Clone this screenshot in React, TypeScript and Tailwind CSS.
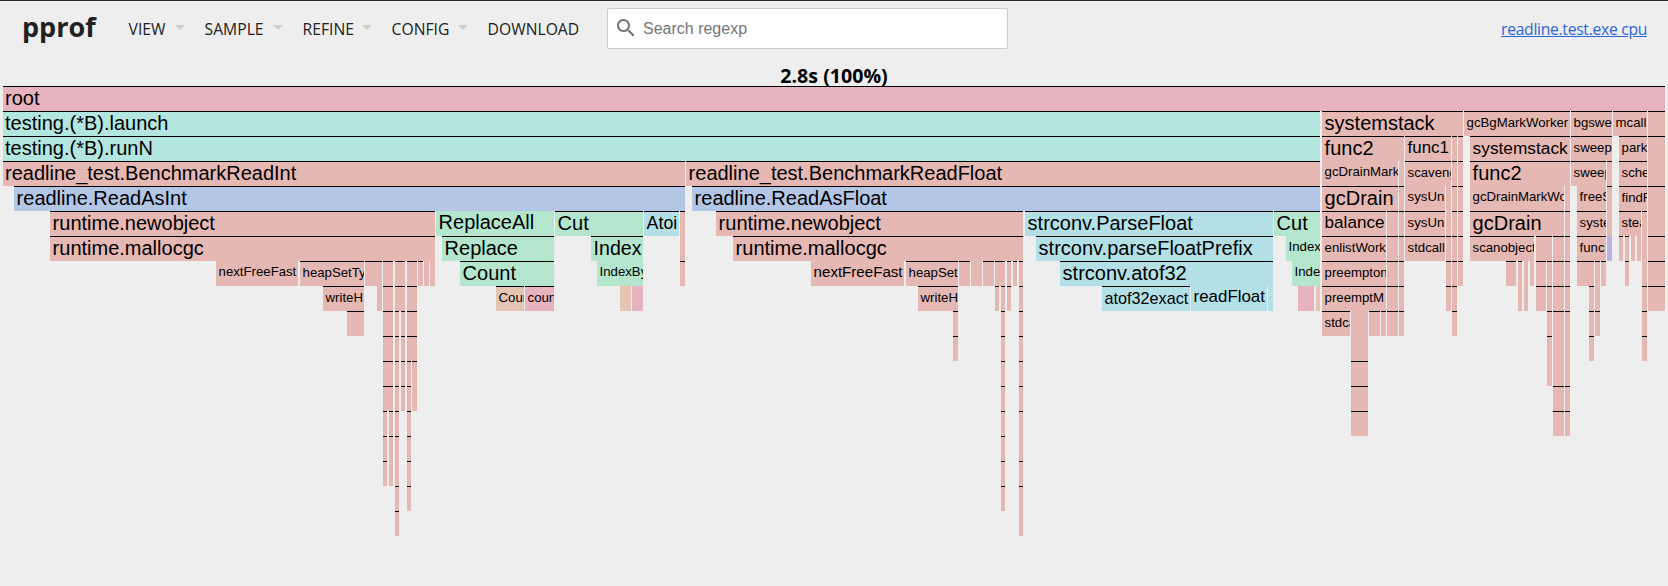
import React from "react";

type Box = [number, number, string, string?, number?];

const COLORS: Record<string, string> = {
  p: "bg-[#e6b3bf]",
  s: "bg-[#e6b8b3]",
  t: "bg-[#b3e6de]",
  b: "bg-[#b3c6e6]",
  g: "bg-[#b3e6cc]",
  c: "bg-[#b3e0e6]",
  o: "bg-[#e6c4b3]",
  v: "bg-[#b8b3e6]",
};

// Each box: start, end, colour key (suffix "-" marks an inlined frame), label, font size.
const S = 13.2;
const ROWS: Box[][] = [
  [[3, 1665, "p", "root"]],
  [[3, 1320, "t", "testing.(*B).launch"], [1322, 1463, "s", "systemstack"], [1464, 1570, "s", "gcBgMarkWorker", S], [1571, 1612, "s", "bgswe", S], [1613, 1647, "s", "mcall", S], [1648, 1665, "s"]],
  [[3, 1320, "t", "testing.(*B).runN"], [1322, 1404, "s", "func2"], [1405, 1451, "s", "func1", 16.9], [1452, 1457, "s"], [1458, 1463, "s"], [1470, 1570, "s", "systemstack", 17.3], [1571, 1612, "s", "sweep", S], [1619, 1647, "s", "park", S], [1648, 1665, "s"]],
  [[3, 685, "s", "readline_test.BenchmarkReadInt"], [686, 1320, "s", "readline_test.BenchmarkReadFloat"], [1322, 1398, "s-", "gcDrainMark", S], [1399, 1404, "s-"], [1405, 1451, "s", "scaveng", S], [1452, 1457, "s"], [1458, 1463, "s"], [1470, 1570, "s", "func2"], [1571, 1606, "s", "sweep", S], [1607, 1612, "s"], [1619, 1647, "s", "sche", S], [1648, 1665, "s-"]],
  [[14, 685, "b", "readline.ReadAsInt"], [692, 1320, "b", "readline.ReadAsFloat"], [1322, 1398, "s", "gcDrain"], [1399, 1404, "s"], [1405, 1445, "s-", "sysUn", S], [1446, 1451, "s-"], [1452, 1457, "s"], [1458, 1463, "s"], [1470, 1564, "s-", "gcDrainMarkWo", S], [1565, 1570, "s-"], [1577, 1606, "s-", "freeS", S], [1607, 1612, "s"], [1619, 1647, "s", "findR", S], [1648, 1665, "s"]],
  [[50, 435, "s", "runtime.newobject"], [436, 554, "g-", "ReplaceAll"], [555, 643, "g", "Cut"], [644, 679, "c", "Atoi", 17.8], [680, 685, "s"], [716, 1023, "s", "runtime.newobject"], [1025, 1273, "c", "strconv.ParseFloat"], [1274, 1320, "g", "Cut"], [1322, 1386, "s", "balance", 17.1], [1387, 1398, "s"], [1399, 1404, "s"], [1405, 1445, "s", "sysUn", S], [1446, 1451, "s-"], [1452, 1457, "s"], [1458, 1463, "s"], [1470, 1564, "s", "gcDrain"], [1565, 1570, "s"], [1577, 1606, "s", "syste", S], [1607, 1612, "s-"], [1619, 1641, "s", "stea", S], [1642, 1647, "s"], [1648, 1665, "s-"]],
  [[50, 435, "s", "runtime.mallocgc"], [442, 554, "g", "Replace"], [591, 643, "g", "Index", 19.6], [680, 685, "s-"], [733, 1023, "s", "runtime.mallocgc"], [1036, 1273, "c", "strconv.parseFloatPrefix"], [1286, 1320, "g-", "Index", S], [1322, 1386, "s", "enlistWork", S], [1387, 1398, "s"], [1399, 1404, "s"], [1405, 1445, "s", "stdcall", S], [1446, 1451, "s"], [1452, 1457, "s"], [1458, 1463, "s"], [1470, 1534, "s", "scanobject", S], [1536, 1552, "s"], [1553, 1564, "s"], [1565, 1570, "s"], [1577, 1606, "s", "func", S], [1607, 1612, "v-"], [1619, 1623, "s"], [1625, 1629, "s"], [1631, 1635, "s-"], [1637, 1641, "s-"], [1642, 1647, "s-"], [1648, 1665, "s"]],
  [[216, 298, "s-", "nextFreeFast", S], [300, 364, "s", "heapSetTy", S], [365, 382, "s"], [383, 393, "s"], [395, 405, "s"], [407, 417, "s"], [418, 423, "s"], [424, 429, "s-"], [430, 435, "s-"], [460, 554, "g", "Count"], [597, 643, "g-", "IndexBy", S], [680, 685, "s"], [811, 904, "s-", "nextFreeFast", 15.1], [906, 958, "s", "heapSet", S], [959, 970, "s"], [971, 982, "s-"], [983, 994, "s"], [995, 1005, "s"], [1007, 1011, "s"], [1013, 1017, "s"], [1019, 1023, "s"], [1060, 1273, "c", "strconv.atof32"], [1292, 1320, "g-", "Inde", S], [1322, 1386, "s", "preempton", S], [1387, 1398, "s"], [1399, 1404, "s"], [1446, 1451, "s"], [1452, 1457, "s"], [1458, 1463, "s"], [1506, 1516, "s"], [1518, 1522, "s"], [1524, 1528, "s-"], [1530, 1534, "s-"], [1536, 1546, "s"], [1547, 1552, "s"], [1553, 1564, "s"], [1565, 1570, "s"], [1577, 1594, "s"], [1595, 1600, "s"], [1601, 1606, "s"], [1625, 1629, "s"], [1642, 1647, "s-"], [1648, 1665, "s"]],
  [[323, 364, "s", "writeH", S], [377, 382, "s-"], [383, 393, "s"], [395, 405, "s"], [407, 417, "s"], [496, 524, "o", "Coun", S], [525, 554, "p", "coun", S], [620, 631, "o-"], [632, 643, "p-"], [918, 958, "s", "writeH", S], [995, 999, "s"], [1001, 1005, "s"], [1007, 1011, "s"], [1019, 1023, "s"], [1102, 1190, "c", "atof32exact", 16.2], [1191, 1267, "c-", "readFloat", 16.9], [1268, 1273, "c-"], [1298, 1314, "p-"], [1316, 1320, "o-"], [1322, 1386, "s", "preemptM", S], [1387, 1398, "s"], [1399, 1404, "s"], [1446, 1451, "s"], [1452, 1457, "s"], [1518, 1522, "s-"], [1524, 1528, "s-"], [1536, 1546, "s"], [1547, 1552, "s"], [1553, 1564, "s"], [1565, 1570, "s"], [1589, 1594, "s"], [1595, 1600, "s-"], [1642, 1647, "s"], [1648, 1665, "s"]],
  [[347, 364, "s"], [383, 393, "s"], [395, 399, "s"], [401, 405, "s"], [407, 417, "s"], [953, 958, "s"], [1001, 1005, "s"], [1019, 1023, "s"], [1322, 1350, "s", "stdca", S], [1351, 1368, "s-"], [1369, 1380, "s"], [1381, 1386, "s"], [1387, 1398, "s"], [1399, 1404, "s"], [1452, 1457, "s"], [1547, 1552, "s"], [1553, 1564, "s"], [1565, 1570, "s"], [1589, 1594, "s"], [1595, 1600, "s"], [1642, 1647, "s"]],
  [[383, 393, "s"], [395, 399, "s"], [401, 405, "s"], [407, 417, "s"], [953, 958, "s"], [1001, 1005, "s"], [1019, 1023, "s"], [1351, 1368, "s-"], [1547, 1552, "s"], [1553, 1564, "s-"], [1565, 1570, "s-"], [1589, 1594, "s"], [1642, 1647, "s"]],
  [[383, 393, "s"], [395, 399, "s"], [401, 405, "s"], [407, 411, "s"], [412, 417, "s"], [1001, 1005, "s"], [1019, 1023, "s"], [1351, 1368, "s"], [1547, 1552, "s-"], [1553, 1564, "s-"], [1565, 1570, "s-"]],
  [[383, 393, "s"], [395, 399, "s"], [401, 405, "s"], [407, 411, "s"], [412, 417, "s-"], [1001, 1005, "s"], [1019, 1023, "s"], [1351, 1368, "s"], [1553, 1564, "s"], [1565, 1570, "s"]],
  [[383, 387, "s"], [389, 393, "s"], [395, 399, "s"], [407, 411, "s"], [1001, 1005, "s"], [1019, 1023, "s"], [1351, 1368, "s"], [1553, 1564, "s"], [1565, 1570, "s"]],
  [[383, 387, "s"], [389, 393, "s"], [395, 399, "s"], [407, 411, "s"], [1001, 1005, "s"], [1019, 1023, "s-"]],
  [[383, 387, "s"], [389, 393, "s-"], [395, 399, "s-"], [407, 411, "s"], [1001, 1005, "s"], [1019, 1023, "s"]],
  [[395, 399, "s"], [407, 411, "s"], [1001, 1005, "s"], [1019, 1023, "s"]],
  [[395, 399, "s"], [1019, 1023, "s-"]],
];

function FlameRow({ boxes }: { boxes: Box[] }) {
  return (
    <div className="flex h-[25px]">
      {boxes.map(([x0, x1, kind, label, size], i) => (
        <div
          key={x0}
          className={`h-[25px] shrink-0 overflow-hidden whitespace-nowrap leading-[22px] text-black ${COLORS[kind[0]]} ${kind.endsWith("-") ? "" : "border-t border-black"} ${label ? (x0 === 3 ? "pl-0.5" : "pl-[2.6px]") : ""}`}
          style={{ marginLeft: x0 - (i ? boxes[i - 1][1] : 0), width: x1 - x0, fontSize: size ?? 20 }}
        >
          {label}
        </div>
      ))}
    </div>
  );
}

function MenuItem({ label, width, arrow = true }: { label: string; width: string; arrow?: boolean }) {
  return (
    <div className={`flex shrink-0 items-center justify-between ${width}`}>
      <span className="whitespace-nowrap">{label}</span>
      {arrow && <i className="-mt-[3px] h-0 w-0 border-x-[5px] border-t-[5px] border-x-transparent border-t-[#cccccc]" />}
    </div>
  );
}

export default function App() {
  return (
    <div className="h-[586px] w-[1668px] overflow-hidden border-t border-[#25252b] bg-[#eeeeee] font-['Liberation_Sans',Arial,sans-serif]">
      <header className="flex h-[54px] items-center pr-[21px] pl-[22px] font-['Open_Sans',sans-serif] text-[15.7px] text-[#212121]">
        <h1 className="w-[106.6px] shrink-0 pb-[2px] text-[27px] leading-8 font-bold">pprof</h1>
        <nav className="flex pt-[3px]">
          <MenuItem label="VIEW" width="w-14 mr-5" />
          <MenuItem label="SAMPLE" width="w-[78px] mr-5" />
          <MenuItem label="REFINE" width="w-[69px] mr-5" />
          <MenuItem label="CONFIG" width="w-[76px] mr-5" />
          <MenuItem label="DOWNLOAD" width="w-[92px]" arrow={false} />
        </nav>
        <div className="ml-[27.4px] flex h-[41px] w-[401px] items-center rounded-xs border border-[#cccccc] bg-white">
          <svg viewBox="0 0 24 24" className="ml-[6px] h-6 w-6 fill-[#757575]">
            <path d="M15.5 14h-.79l-.28-.27C15.41 12.59 16 11.11 16 9.5 16 5.91 13.09 3 9.5 3S3 5.91 3 9.5 5.91 16 9.5 16c1.61 0 3.09-.59 4.23-1.57l.27.28v.79l5 4.99L20.49 19l-4.99-5zm-6 0C7.01 14 5 11.99 5 9.5S7.01 5 9.5 5 14 7.01 14 9.5 11.99 14 9.5 14z" />
          </svg>
          <span className="ml-[5px] pt-0.5 font-['Liberation_Sans',Arial,sans-serif] text-base text-[#757575]">Search regexp</span>
        </div>
        <a className="ml-auto pt-[3px] tracking-[-0.3px] text-[#2a66d9] underline">readline.test.exe cpu</a>
      </header>
      <div className="flex h-[31px] justify-center pt-[9px] font-['Open_Sans',sans-serif] text-[19.6px] leading-6 font-bold text-black">2.8s (100%)</div>
      <main>
        {ROWS.map((boxes, i) => (
          <FlameRow key={i} boxes={boxes} />
        ))}
      </main>
    </div>
  );
}
